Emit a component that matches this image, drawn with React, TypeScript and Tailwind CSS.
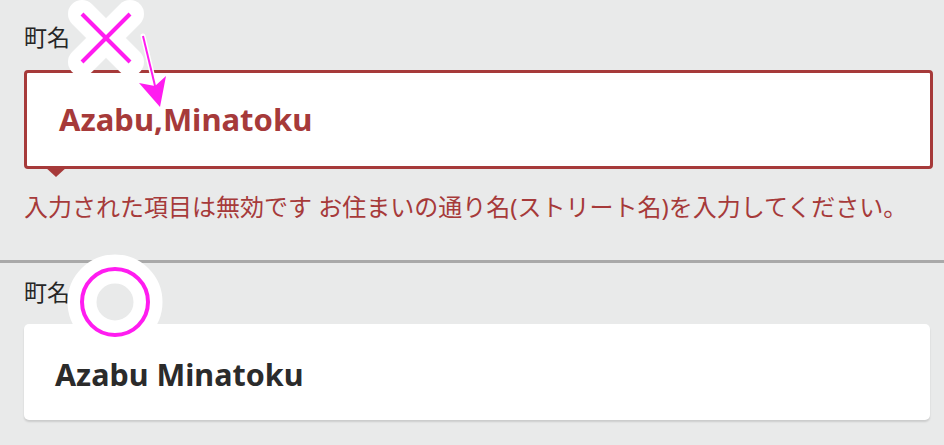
const sans = "font-['Noto_Sans','Noto_Sans_CJK_JP',sans-serif]";

const Marks = () => (
  <svg
    className="pointer-events-none absolute left-0 top-0"
    width={944}
    height={445}
    viewBox="0 0 944 445"
  >
    {/* wrong: cross + arrow */}
    <g strokeLinecap="round" stroke="#fff" strokeWidth={28}>
      <line x1={82} y1={14} x2={130} y2={62} />
      <line x1={130} y1={14} x2={82} y2={62} />
    </g>
    <g stroke="#ff1cf0" strokeWidth={4}>
      <line x1={82} y1={14} x2={130} y2={62} />
      <line x1={130} y1={14} x2={82} y2={62} />
    </g>
    <line x1={143} y1={36} x2={156} y2={90} stroke="#fff" strokeWidth={5} strokeLinecap="round" />
    <polygon points="160,108 138,82 155,86 167,75" fill="#fff" stroke="#fff" strokeWidth={3} strokeLinejoin="round" />
    <line x1={143} y1={36} x2={156} y2={90} stroke="#ff1cf0" strokeWidth={2} />
    <polygon points="160,107 139,83 155,86 166,76" fill="#ff1cf0" />

    {/* right: circle */}
    <circle cx={115} cy={302} r={33} fill="none" stroke="#fff" strokeWidth={29} />
    <circle cx={115} cy={302} r={33} fill="none" stroke="#ff1cf0" strokeWidth={4} />
  </svg>
);

export default function App() {
  return (
    <div className={`relative h-[445px] w-[944px] overflow-hidden bg-[#e9eaea] ${sans}`}>
      <div className="pl-[24px] pr-[11px] pt-[22px]">
        <div className="text-[23px] leading-[30px] text-[#262626]">町名</div>
        <div className="relative mt-[18px] flex h-[99px] items-center rounded-[4px] border-[3px] border-[#a63a3a] bg-white pl-[32px]">
          <span className="text-[31px] font-bold leading-none text-[#a63a3a]">
            Azabu,Minatoku
          </span>
          <span className="absolute left-[17px] top-full h-0 w-0 border-l-[12px] border-r-[12px] border-t-[11px] border-l-transparent border-r-transparent border-t-[#a63a3a]" />
        </div>
        <p className="mt-[22px] text-[24px] leading-[32px] text-[#a63a3a]">
          入力された項目は無効です お住まいの通り名(ストリート名)を入力してください。
        </p>
      </div>

      <div className="mt-[37px] h-[3px] bg-[#a9a9a9]" />

      <div className="pl-[24px] pr-[14px] pt-[14px]">
        <div className="text-[23px] leading-[30px] text-[#262626]">町名</div>
        <div className="mt-[17px] flex h-[96px] items-center rounded-[5px] bg-white pl-[31px] pt-[4px] shadow-[0_2px_2px_rgba(0,0,0,0.13)]">
          <span className="text-[30.5px] font-bold leading-none text-[#2b2b2b]">
            Azabu Minatoku
          </span>
        </div>
      </div>

      <Marks />
    </div>
  );
}
